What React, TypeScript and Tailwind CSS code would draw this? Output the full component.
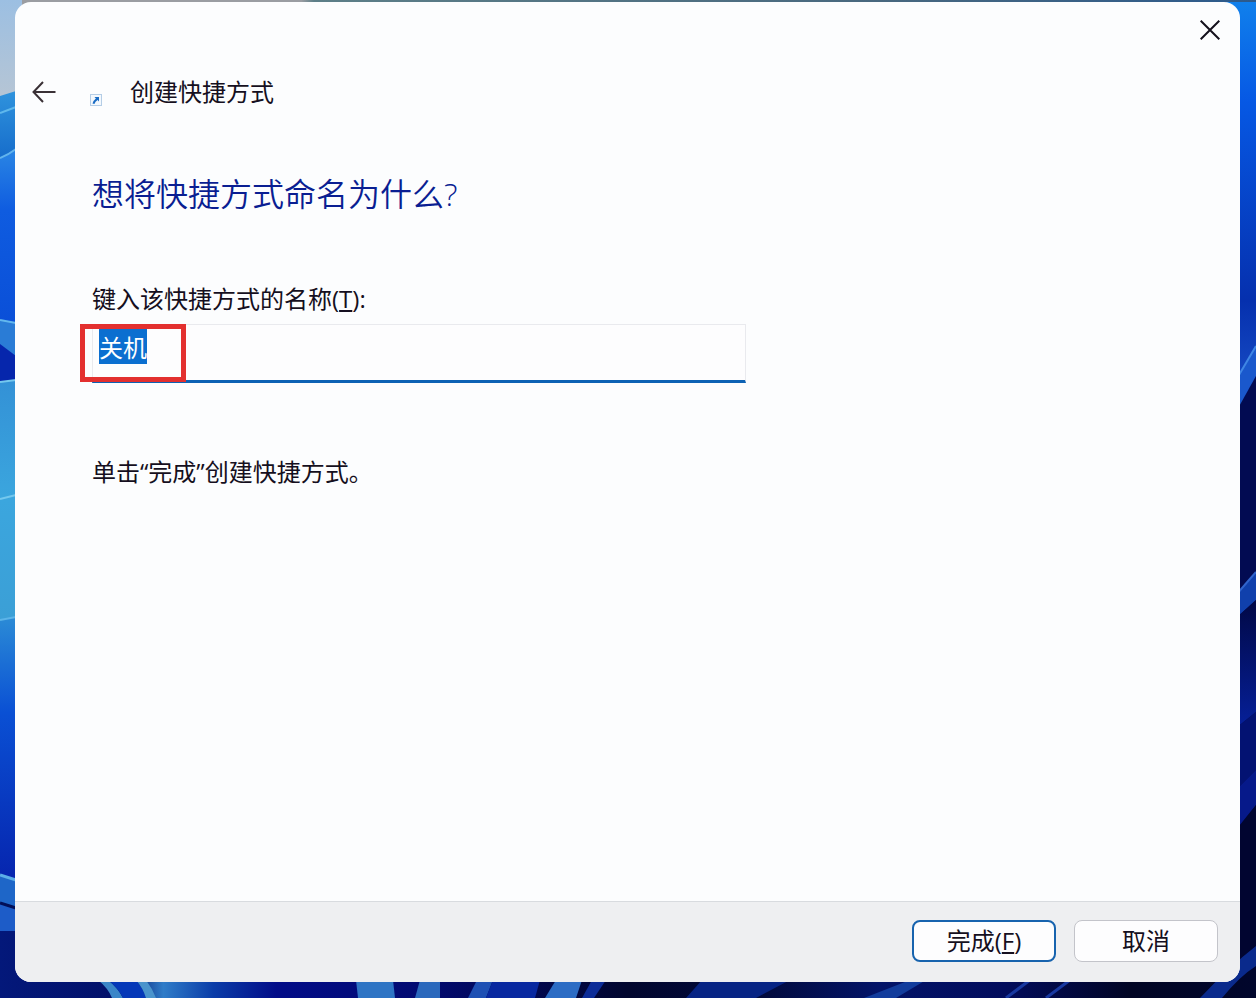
import { useEffect, useRef, useState } from "react";

function Wallpaper() {
  return (
    <svg
      aria-hidden="true"
      className="absolute inset-0 -z-10 size-full"
      preserveAspectRatio="none"
      viewBox="0 0 1256 998"
    >
      <defs>
        <linearGradient id="sky" x1="0" x2="1" y1="0" y2="0">
          <stop offset="0" stopColor="#9a9da2" />
          <stop offset="0.24" stopColor="#9a9da2" />
          <stop offset="0.25" stopColor="#5d7f88" />
          <stop offset="0.7" stopColor="#48687f" />
          <stop offset="1" stopColor="#2c5a8c" />
        </linearGradient>
        <linearGradient id="haze" x1="0" x2="0" y1="0" y2="1">
          <stop offset="0" stopColor="#9cbfe2" />
          <stop offset="1" stopColor="#b9c6d3" />
        </linearGradient>
        <linearGradient id="petalA" x1="0" x2="0" y1="0" y2="1">
          <stop offset="0" stopColor="#2f93dd" />
          <stop offset="1" stopColor="#1266c8" />
        </linearGradient>
        <linearGradient id="petalB" x1="0" x2="0" y1="0" y2="1">
          <stop offset="0" stopColor="#2a86e4" />
          <stop offset="0.35" stopColor="#0f5ce0" />
          <stop offset="1" stopColor="#0a4fd8" />
        </linearGradient>
        <linearGradient id="petalC" x1="0" x2="0" y1="0" y2="1">
          <stop offset="0" stopColor="#3391d6" />
          <stop offset="0.5" stopColor="#3ba6de" />
          <stop offset="1" stopColor="#3b9fd6" />
        </linearGradient>
        <linearGradient id="petalD" x1="0" x2="0" y1="0" y2="1">
          <stop offset="0" stopColor="#2b8bd6" />
          <stop offset="0.35" stopColor="#0a50d4" />
          <stop offset="1" stopColor="#0622ac" />
        </linearGradient>
        <linearGradient id="rightTop" x1="0" x2="0" y1="0" y2="1">
          <stop offset="0" stopColor="#1080ec" />
          <stop offset="0.25" stopColor="#0658e4" />
          <stop offset="0.75" stopColor="#0530ae" />
          <stop offset="1" stopColor="#1a50c8" />
        </linearGradient>
        <linearGradient id="rightLow" x1="0" x2="0" y1="0" y2="1">
          <stop offset="0" stopColor="#010845" />
          <stop offset="1" stopColor="#06209a" />
        </linearGradient>
        <linearGradient id="floor" x1="0" x2="1" y1="0" y2="0">
          <stop offset="0" stopColor="#03187a" />
          <stop offset="0.1" stopColor="#021068" />
          <stop offset="0.13" stopColor="#2f7cc8" />
          <stop offset="0.17" stopColor="#0a3ca8" />
          <stop offset="0.22" stopColor="#020c88" />
          <stop offset="0.34" stopColor="#020a70" />
          <stop offset="0.5" stopColor="#01062e" />
          <stop offset="0.6" stopColor="#020a3a" />
          <stop offset="0.7" stopColor="#031468" />
          <stop offset="0.8" stopColor="#020c5c" />
          <stop offset="0.9" stopColor="#010524" />
          <stop offset="1" stopColor="#01062c" />
        </linearGradient>
      </defs>

      <rect fill="url(#sky)" height="998" width="1256" />

      {/* left petals */}
      <rect fill="url(#haze)" height="110" width="22" />
      <path d="M0 96 L16 91 V170 H0Z" fill="url(#petalA)" />
      <path d="M0 113 L16 107" fill="none" stroke="#5fb8ec" strokeWidth="2" />
      <path d="M0 158 Q8 155 16 149 V325 H0Z" fill="url(#petalB)" />
      <path d="M0 158 Q8 155 16 149" fill="none" stroke="#62b4ee" strokeWidth="2" />
      <path d="M0 320 L16 323 V385 H0Z" fill="#2a7cd6" />
      <path d="M0 320 L16 323" fill="none" stroke="#62b8ee" strokeWidth="2" />
      <path d="M0 344 L16 356 V385 H0Z" fill="#0626ac" />
      <path d="M0 382 L16 380 V620 H0Z" fill="url(#petalC)" />
      <path d="M0 382 L16 380 M0 499 L16 495" fill="none" stroke="#74c8ee" strokeWidth="2" />
      <path d="M0 620 L16 617 V890 H0Z" fill="url(#petalD)" />
      <path d="M0 620 L16 617" fill="none" stroke="#5cb4e8" strokeWidth="2" />
      <path d="M0 875 L16 880 V909 H0Z" fill="#1e66c8" />
      <path d="M0 875 L16 880" fill="none" stroke="#5caee8" strokeWidth="3" />
      <path d="M0 903 L16 908 V940 H0Z" fill="#1d5cc8" />
      <path d="M0 903 L16 908" fill="none" stroke="#020f58" strokeWidth="3" />

      {/* right petals */}
      <path d="M1226 2 H1256 V400 H1226Z" fill="url(#rightTop)" />
      <path d="M1236 380 L1256 346 V376 L1236 412Z" fill="#1a58cc" />
      <path d="M1236 380 L1256 346" fill="none" stroke="#3f86e4" strokeWidth="2" />
      <path d="M1236 412 L1256 376 V998 H1236Z" fill="#020b52" />
      <path d="M1236 595 L1256 572 V600 L1236 618Z" fill="#1040ac" />
      <path d="M1236 595 L1256 572" fill="none" stroke="#3064cc" strokeWidth="2" />
      <path d="M1236 618 L1256 600 V712 L1236 728Z" fill="url(#rightLow)" />
      <path d="M1236 728 L1256 712 V770 L1236 790Z" fill="#031272" />
      <path d="M1236 790 L1256 770 V805 L1236 830Z" fill="#06198a" />
      <path d="M1236 830 L1256 805 V998 H1236Z" fill="#010530" />

      {/* bottom petals */}
      <path d="M0 931 H16 V970 H1256 V998 H0Z" fill="url(#floor)" />
      <path d="M98 980 Q108 988 112 998 H123 Q118 988 108 980Z" fill="#3a86c8" />
      <path d="M108 980 Q118 988 123 998 H146 Q143 988 136 980Z" fill="#0538b8" />
      <path d="M136 980 Q143 988 146 998 H156 Q152 988 146 980Z" fill="#4a94cc" />
      <path d="M356 980 H393 L395 998 H358Z" fill="#2e74c4" />
      <path d="M420 980 H440 V998 H415Z" fill="#2a68bc" />
      <path d="M477 980 H493 L486 998 H468Z" fill="#1e50b4" />
      <path d="M493 980 H540 L535 998 H486Z" fill="#0828a0" />
      <path d="M556 980 H582 L576 998 H545Z" fill="#2c6cc4" />
      <path d="M592 980 H606 L594 998 H582Z" fill="#0c2c98" />
      <path d="M702 980 H790 L756 998 H686Z" fill="#072484" />
      <path d="M910 980 H926 L896 998 H864Z" fill="#123c9c" />
      <path d="M1030 980 L1006 998 M1070 980 L1046 998" fill="none" stroke="#1838a0" strokeWidth="3" />
      <path d="M1256 946 Q1230 966 1200 998 H1222 Q1240 976 1256 966Z" fill="#0a2a8c" />
    </svg>
  );
}

function BackIcon() {
  return (
    <svg aria-hidden="true" className="h-6 w-6" fill="none" stroke="#3a3136" strokeWidth="2" viewBox="0 0 24 24">
      <path d="M23.500 12H1.500M11 2L1.500 12L11 22" />
    </svg>
  );
}

function ShortcutIcon() {
  return (
    <svg aria-hidden="true" className="h-3 w-3" viewBox="0 0 12 12">
      <rect fill="#f3f8fd" height="11" stroke="#b4cde6" width="11" x="0.500" y="0.500" />
      <path d="M4.500 3H9V7.500L7.600 6.100Q5.200 7.400 4.400 10L2.500 9.500Q3.200 6.500 5.900 4.400Z" fill="#1a6cc4" />
    </svg>
  );
}

function CloseIcon() {
  return (
    <svg aria-hidden="true" className="h-5 w-5" fill="none" stroke="#14101c" strokeWidth="2" viewBox="0 0 20 20">
      <path d="M0.700 0.700L19.300 19.300M19.300 0.700L0.700 19.300" />
    </svg>
  );
}

export default function App() {
  const [name, setName] = useState("关机");
  const inputRef = useRef<HTMLInputElement>(null);

  useEffect(() => {
    inputRef.current?.focus();
    inputRef.current?.select();
  }, []);

  return (
    <div className="relative isolate flex min-h-screen overflow-hidden pt-0.5 pr-4 pb-4 pl-[15px] font-['Open_Sans','Noto_Sans_CJK_SC',sans-serif] text-2xl text-[#150f20]">
      <Wallpaper />
      <form
        className="flex flex-1 flex-col overflow-hidden rounded-2xl bg-[#fcfdfe]"
        onSubmit={(event) => event.preventDefault()}
      >
        <div className="flex justify-end pr-0.5">
          <button aria-label="关闭" className="flex size-14 items-center justify-center" type="button">
            <CloseIcon />
          </button>
        </div>

        <header className="flex h-[68px] items-center pl-[17px]">
          <button aria-label="返回" type="button">
            <BackIcon />
          </button>
          <span className="mt-4 ml-[34px]">
            <ShortcutIcon />
          </span>
          <h1 className="ml-7">创建快捷方式</h1>
        </header>

        <main className="flex-1 px-[77px] pt-11">
          <h2 className="text-[32px] leading-12 font-[350] text-[#0a1e92]">想将快捷方式命名为什么?</h2>

          <label className="mt-[65px] block leading-8" htmlFor="shortcut-name">
            键入该快捷方式的名称(<span className="underline decoration-2 underline-offset-2">T</span>):
          </label>
          <div className="relative mt-[9px] max-w-[654px]">
            <input
              className="block h-[59px] w-full border border-b-3 border-[#e9eaee] border-b-[#0d62b4] bg-[#fdfdfe] px-1.5 pb-3 leading-8 outline-none selection:bg-[#0b6fd0] selection:text-white"
              id="shortcut-name"
              onChange={(event) => setName(event.target.value)}
              ref={inputRef}
              type="text"
              value={name}
            />
            <div className="pointer-events-none absolute top-0 -left-3 h-[58px] w-[106px] border-5 border-[#e3302f]" />
          </div>

          <p className="mt-[73px] leading-8">单击“完成”创建快捷方式。</p>
        </main>

        <footer className="flex justify-end gap-[18px] border-t border-[#d8dbdf] bg-[#eeeff1] pt-[18px] pr-[22px] pb-5">
          <button
            className="h-[42px] w-36 rounded-lg border-2 border-[#1763ae] bg-[#fdfdfe] leading-8"
            type="submit"
          >
            完成(<span className="underline decoration-2 underline-offset-2">F</span>)
          </button>
          <button className="h-[42px] w-36 rounded-lg border border-[#c3c4ca] bg-[#fdfdfe] leading-8" type="button">
            取消
          </button>
        </footer>
      </form>
    </div>
  );
}
